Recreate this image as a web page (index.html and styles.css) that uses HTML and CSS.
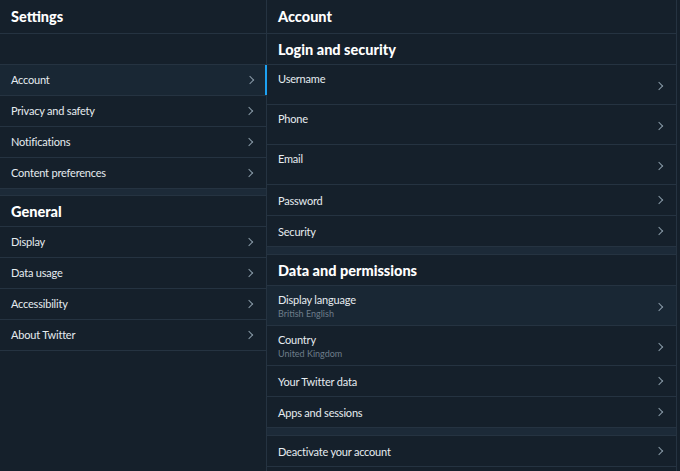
FILE: index.html
```html
<!DOCTYPE html>
<html lang="en">
<head>
  <meta charset="UTF-8">
  <title>Settings</title>
  <link rel="stylesheet" href="styles.css">
</head>
<body>

<div class="layout">
  <!-- left menu -->
  <nav class="menu">
    <div class="head">Settings</div>
    <div class="blank"></div>
    <a class="item active"><span>Account</span><i class="chev"></i></a>
    <a class="item"><span>Privacy and safety</span><i class="chev"></i></a>
    <a class="item"><span>Notifications</span><i class="chev"></i></a>
    <a class="item"><span>Content preferences</span><i class="chev"></i></a>
    <div class="gap"></div>
    <div class="head">General</div>
    <a class="item"><span>Display</span><i class="chev"></i></a>
    <a class="item"><span>Data usage</span><i class="chev"></i></a>
    <a class="item"><span>Accessibility</span><i class="chev"></i></a>
    <a class="item"><span>About Twitter</span><i class="chev"></i></a>
  </nav>

  <!-- account panel -->
  <main class="panel">
    <div class="head">Account</div>
    <div class="head">Login and security</div>
    <a class="item tall"><div class="txt"><span>Username</span><small></small></div><i class="chev"></i></a>
    <a class="item tall"><div class="txt"><span>Phone</span><small></small></div><i class="chev"></i></a>
    <a class="item tall"><div class="txt"><span>Email</span><small></small></div><i class="chev"></i></a>
    <a class="item"><span>Password</span><i class="chev"></i></a>
    <a class="item"><span>Security</span><i class="chev"></i></a>
    <div class="gap"></div>
    <div class="head">Data and permissions</div>
    <a class="item tall hover"><div class="txt"><span>Display language</span><small>British English</small></div><i class="chev"></i></a>
    <a class="item tall"><div class="txt"><span>Country</span><small>United Kingdom</small></div><i class="chev"></i></a>
    <a class="item"><span>Your Twitter data</span><i class="chev"></i></a>
    <a class="item"><span>Apps and sessions</span><i class="chev"></i></a>
    <div class="gap"></div>
    <a class="item"><span>Deactivate your account</span><i class="chev"></i></a>
  </main>
</div>

</body>
</html>
```

FILE: styles.css
```css
* { margin: 0; padding: 0; box-sizing: border-box; }
html, body { height: 100%; overflow: hidden; }
body { background: #15202b; color: #e6ecf0; font-family: 'Lato', 'Open Sans', sans-serif; font-size: 11px; letter-spacing: -0.2px; }

.layout { display: flex; height: 100%; }
.menu { width: 267px; border-right: 1px solid #253341; }
.panel { width: 410px; border-right: 1px solid #253341; }

.head {
  height: 31px;
  padding: 0 11px;
  display: flex;
  align-items: center;
  border-bottom: 1px solid #253341;
  color: #fff;
  font-size: 14.5px;
  font-weight: 900;
  letter-spacing: 0;
}
.menu .head:first-child, .panel .head:first-child { height: 34px; }
.blank { height: 31px; border-bottom: 1px solid #253341; }

.item {
  display: flex;
  align-items: center;
  justify-content: space-between;
  height: 31px;
  padding: 0 12px 0 11px;
  border-bottom: 1px solid #253341;
  cursor: pointer;
}
.item span { line-height: 15px; }
.menu .item span { margin-top: -1px; }
.item.active { background: #192734; box-shadow: inset -2px 0 0 #1da1f2; margin-right: -1px; }
.item.hover { background: #192734; }
.item.tall { height: 40px; align-items: flex-start; padding-top: 6px; }
.item.tall .chev { margin-top: 12px; }
.txt { display: flex; flex-direction: column; }
.txt small { font-size: 9px; color: #6e7d8a; min-height: 13px; line-height: 13px; letter-spacing: 0; }

.chev {
  width: 6px;
  height: 6px;
  border-top: 1.2px solid #8899a6;
  border-right: 1.2px solid #8899a6;
  transform: rotate(45deg);
  margin-right: 2px;
}

.gap {
  height: 8px;
  background: #1c2a38;
  border-bottom: 1px solid #253341;
}
.menu .gap { height: 7px; }
```
